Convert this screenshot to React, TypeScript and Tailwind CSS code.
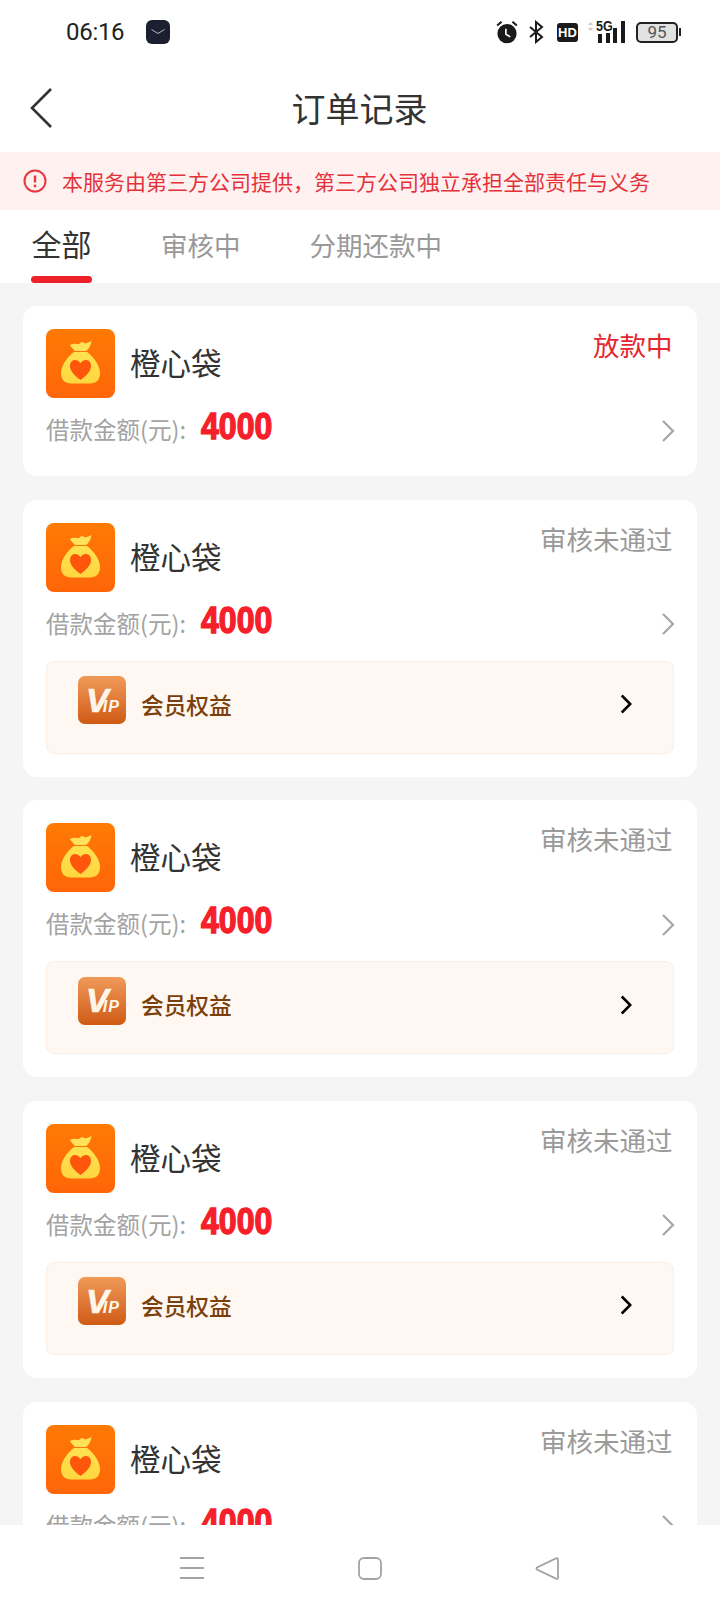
import React from "react";

const cjk = { fontFamily: '"Noto Sans CJK SC", sans-serif' };

function Bag() {
  return (
    <div className="w-[69px] h-[69px] shrink-0 rounded-[8px] bg-gradient-to-b from-[#ff7a05] to-[#ff6508] flex items-center justify-center">
      <svg width="69" height="69" viewBox="0 0 69 69">
        <defs>
          <linearGradient id="bagg" x1="0" y1="0" x2="0" y2="1">
            <stop offset="0" stopColor="#ffe250" />
            <stop offset="1" stopColor="#ffd640" />
          </linearGradient>
        </defs>
        <path d="M24 16 C27 14 30 15 33 15 C35 13 37 12 38 14 C40 15 43 13 45.5 12 C45 16 43 20 40 22 L29 22 C27 20 25 18 24 16 Z" fill="#ffe25a" />
        <path d="M28 23 L41 23 C48 28 54 37 54 44 C54 51 50 54.5 44 54.5 L25 54.5 C19 54.5 15 51 15 44 C15 37 21 28 28 23 Z" fill="url(#bagg)" />
        <path d="M34.5 51 C28 46 24 42 24 37 C24 33 26.5 31 29 31 C31.5 31 33.5 32.3 34.5 34.3 C35.5 32.3 37.5 31 40 31 C42.5 31 45 33 45 37 C45 42 41 46 34.5 51 Z" fill="#ff560c" />
      </svg>
    </div>
  );
}

function VipIcon() {
  return (
    <div className="w-[48px] h-[48px] shrink-0 rounded-[7px] bg-gradient-to-b from-[#f09a58] to-[#cf5a10] flex items-center pl-[8px] overflow-hidden">
      <span className="text-[#fff6ea] italic font-bold leading-none flex items-baseline mt-[-1px]" style={{ fontFamily: '"Liberation Sans", sans-serif' }}>
        <span className="text-[34px] tracking-[-6px] [-webkit-text-stroke:0.7px_#fff6ea]">V</span>
        <span className="text-[16px] tracking-[1px]">IP</span>
      </span>
    </div>
  );
}

function Chev({ className = "", color = "#a6a6a6", w = 2.2 }: { className?: string; color?: string; w?: number }) {
  return (
    <svg className={className} width="14" height="24" viewBox="0 0 14 24" fill="none">
      <path d="M2 2 L12 12 L2 22" stroke={color} strokeWidth={w} />
    </svg>
  );
}

function Card({ status, red, vip }: { status: string; red?: boolean; vip?: boolean }) {
  return (
    <div className={`bg-white rounded-[14px] mx-[23px] px-[23px] pt-[23px] shrink-0 ${vip ? "pb-[23px]" : "pb-[27px]"}`}>
      <div className="flex items-start h-[69px]">
        <Bag />
        <div className="ml-[15px] text-[30.5px] leading-[69px] text-[#333333] flex-1 -mt-[1px]">橙心袋</div>
        <div className={`text-[26.5px] leading-[36px] ${red ? "text-[#e5262e]" : "text-[#9a9a9a]"} -mt-[2px] mr-[1.5px]`}>{status}</div>
      </div>
      <div className="flex items-center h-[40px] mt-[11px]">
        <span className="text-[23.5px] leading-[40px] text-[#a3a3a3]">借款金额(元):</span>
        <span
          className="ml-[15px] -mt-[4px] text-[36px] leading-[40px] font-bold text-[#f5202a] origin-left scale-x-[0.89] [-webkit-text-stroke:1.4px_#f5202a]"
          style={{ fontFamily: '"Liberation Sans", sans-serif' }}
        >
          4000
        </span>
        <Chev className="ml-auto mt-[3px] mr-[-1px]" />
      </div>
      {vip && (
        <div className="mt-[18px] h-[93px] rounded-[8px] bg-[#fff7f2] border border-[#fbeee5] flex items-center pl-[31px] pr-[40px]">
          <div className="-mt-[14px]">
            <VipIcon />
          </div>
          <span className="ml-[15px] text-[22.7px] text-[#7a3f0a] font-medium flex-1 -mt-[5px]">会员权益</span>
          <Chev color="#000000" w={3} className="-mt-[6px] scale-[0.85]" />
        </div>
      )}
    </div>
  );
}

export default function App() {
  return (
    <div className="w-[720px] h-[1612px] flex flex-col overflow-hidden bg-[#f5f5f5]" style={cjk}>
      {/* status bar */}
      <div className="h-[64px] bg-white flex items-center shrink-0 pl-[66px] pr-[39px]">
        <span className="text-[24px] tracking-[-0.3px] text-[#222222] leading-none" style={{ fontFamily: "Roboto, sans-serif" }}>06:16</span>
        <div className="ml-[22px] w-[24px] h-[24px] rounded-[6px] bg-[#1b1f30] flex items-center justify-center">
          <svg width="14" height="8" viewBox="0 0 14 8" fill="none"><path d="M0.5 1.5 L7 5.5 L13.5 1.5" stroke="#dfe2ee" strokeWidth="0.8" /></svg>
        </div>
        <div className="ml-auto flex items-center">
          <svg width="24" height="24" viewBox="0 0 22 22">
            <circle cx="11" cy="12.5" r="8.8" fill="#1a1a1a" />
            <path d="M2 5 L6 1.5 M20 5 L16 1.5" stroke="#1a1a1a" strokeWidth="1.8" />
            <path d="M10 8 L10 13 L14 15.5" stroke="#fff" strokeWidth="1.5" fill="none" />
          </svg>
          <svg className="ml-[9px]" width="16" height="24" viewBox="0 0 16 24" fill="none">
            <path d="M2 7 L14 17 L8 22 L8 2 L14 7 L2 17" stroke="#1a1a1a" strokeWidth="2" />
          </svg>
          <div className="ml-[13px] w-[21px] h-[19px] rounded-[3px] bg-[#1a1a1a] text-white text-[13px] font-bold leading-[19px] text-center" style={{ fontFamily: '"Liberation Sans", sans-serif' }}>HD</div>
          <div className="relative ml-[9px] w-[40px] h-[22px]">
            <span className="absolute left-[9px] top-[-1px] text-[14px] font-bold leading-[13px] text-[#1a1a1a] scale-x-90 origin-left" style={{ fontFamily: '"Liberation Sans", sans-serif' }}>5G</span>
            <svg className="absolute left-0 top-0" width="40" height="22" viewBox="0 0 40 22">
              <path d="M1 4 L3.5 1 L6 4 Z M1 7 L3.5 10 L6 7 Z" fill="#c9c9c9" />
              <rect x="11" y="13" width="4" height="9" fill="#1a1a1a" />
              <rect x="19" y="12" width="4" height="10" fill="#1a1a1a" />
              <rect x="26" y="7" width="4" height="15" fill="#1a1a1a" />
              <rect x="34" y="0" width="4" height="22" fill="#1a1a1a" />
            </svg>
          </div>
          <div className="ml-[9px] w-[42px] h-[21px] rounded-[5px] border-2 border-[#222222] bg-[#e2e2e2] flex items-center justify-center text-[17px] text-[#555555] leading-none" style={{ fontFamily: "Roboto, sans-serif" }}>95</div>
          <div className="ml-[1px] w-[2px] h-[8px] bg-[#222222]" />
        </div>
      </div>
      {/* header */}
      <div className="h-[88px] bg-white relative flex items-center justify-center shrink-0">
        <svg className="absolute left-[29px] top-[23px]" width="24" height="42" viewBox="0 0 24 42" fill="none">
          <path d="M22 2 L3 21 L22 40" stroke="#333333" strokeWidth="2.6" />
        </svg>
        <span className="text-[34px] text-[#333333] leading-none -ml-[1px]">订单记录</span>
      </div>
      {/* banner */}
      <div className="h-[58px] bg-[#fff1f0] flex items-center pl-[23px] shrink-0">
        <svg width="24" height="24" viewBox="0 0 24 24" fill="none">
          <circle cx="12" cy="12" r="10.5" stroke="#e8383f" strokeWidth="2" />
          <path d="M12 6.5 L12 13.5" stroke="#e8383f" strokeWidth="2.4" />
          <circle cx="12" cy="17" r="1.4" fill="#e8383f" />
        </svg>
        <span className="ml-[15px] text-[21px] text-[#e5323a] leading-none whitespace-nowrap">本服务由第三方公司提供，第三方公司独立承担全部责任与义务</span>
      </div>
      {/* tabs */}
      <div className="h-[73px] bg-white flex shrink-0 pl-[31px]">
        <div className="relative h-full w-[61px] flex justify-center pt-[12px]">
          <span className="text-[30px] leading-[42px] text-[#333333]">全部</span>
          <div className="absolute bottom-0 left-0 right-0 h-[7px] rounded-full bg-[#ee2028]" />
        </div>
        <span className="ml-[69px] mt-[16px] text-[26.5px] leading-[38px] text-[#999999]">审核中</span>
        <span className="ml-[69px] mt-[16px] text-[26.5px] leading-[38px] text-[#999999]">分期还款中</span>
      </div>
      {/* list */}
      <div className="flex-1 min-h-0 overflow-hidden pt-[23px] flex flex-col gap-[23.67px]">
        <Card status="放款中" red />
        <Card status="审核未通过" vip />
        <Card status="审核未通过" vip />
        <Card status="审核未通过" vip />
        <Card status="审核未通过" vip />
      </div>
      {/* bottom nav */}
      <div className="h-[87px] bg-white shrink-0 flex items-start justify-center pt-[32px]">
        <div className="relative w-[440px] h-[24px]">
          <svg className="absolute left-[40px] top-0" width="24" height="22" viewBox="0 0 24 22" fill="none">
            <path d="M0 1 L24 1 M0 11 L24 11 M0 21 L24 21" stroke="#a3a3a3" strokeWidth="1.8" />
          </svg>
          <svg className="absolute left-[218px] top-0" width="24" height="23" viewBox="0 0 24 23" fill="none">
            <rect x="1" y="1" width="22" height="21" rx="5" stroke="#a3a3a3" strokeWidth="1.8" />
          </svg>
          <svg className="absolute left-[395px] top-0" width="24" height="23" viewBox="0 0 24 23" fill="none">
            <path d="M23 2.5 L23 20.5 Q23 22.5 21 21.6 L2 12.5 Q1 11.5 2 10.5 L21 1.4 Q23 0.6 23 2.5 Z" stroke="#a3a3a3" strokeWidth="1.8" />
          </svg>
        </div>
      </div>
    </div>
  );
}
